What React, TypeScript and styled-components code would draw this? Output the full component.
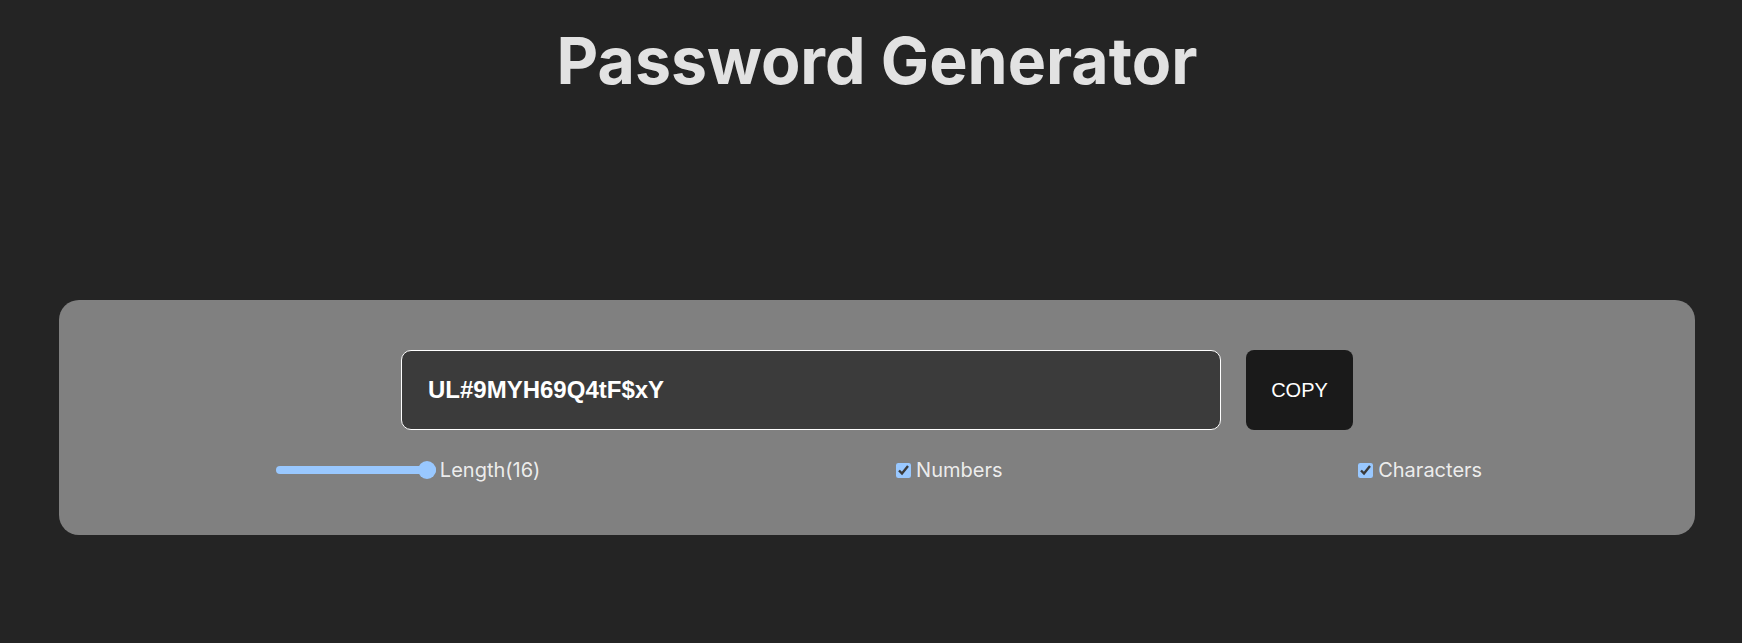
import React, { useState } from "react";
import styled, { createGlobalStyle } from "styled-components";

const GlobalStyle = createGlobalStyle`
  :root {
    color-scheme: dark;
  }
  html, body {
    margin: 0;
    padding: 0;
    background: #242424;
  }
  body {
    font-family: Inter, "Noto Sans", sans-serif;
    color: rgba(255, 255, 255, 0.87);
    line-height: 1.5;
  }
`;

const Page = styled.div`
  display: flex;
  flex-direction: column;
  padding: 0 47px 0 59px;
  min-height: 643px;
  box-sizing: border-box;
`;

const Title = styled.h1`
  margin: 25px 0 0;
  font-family: Inter, sans-serif;
  font-weight: 700;
  font-size: 64.4px;
  line-height: 72px;
  text-align: center;
  color: rgba(255, 255, 255, 0.87);
`;

const Card = styled.div`
  margin-top: 203px;
  background: #808080;
  border-radius: 20px;
  padding: 50px 36px 50px 40px;
  display: flex;
  flex-direction: column;
  gap: 25px;
`;

const InputRow = styled.div`
  display: flex;
  justify-content: center;
  gap: 25px;
  padding-right: 4px;
`;

const PasswordField = styled.input`
  width: 820px;
  height: 80px;
  box-sizing: border-box;
  border: 1px solid #ffffff;
  border-radius: 10px;
  background: #3b3b3b;
  color: #ffffff;
  padding: 0 26px;
  font-family: "Liberation Sans", Arial, sans-serif;
  font-weight: 700;
  font-size: 24px;
  outline: none;
`;

const CopyButton = styled.button`
  width: 107px;
  height: 80px;
  border: none;
  border-radius: 8px;
  background: #1a1a1a;
  color: #ffffff;
  font-family: "Liberation Sans", Arial, sans-serif;
  font-size: 20px;
  cursor: pointer;
`;

const OptionsRow = styled.div`
  display: flex;
  justify-content: space-around;
  align-items: center;
  height: 30px;
`;

const Option = styled.label`
  display: flex;
  align-items: center;
  font-family: Inter, sans-serif;
  font-size: 20px;
  line-height: 30px;
  color: rgba(255, 255, 255, 0.87);
`;

const Range = styled.input`
  -webkit-appearance: none;
  appearance: none;
  width: 160px;
  height: 18px;
  margin: 0 4px 0 0;
  background: transparent;
  &::-webkit-slider-runnable-track {
    height: 8px;
    border-radius: 4px;
    background: #99c8ff;
  }
  &::-webkit-slider-thumb {
    -webkit-appearance: none;
    width: 18px;
    height: 18px;
    margin-top: -5px;
    border-radius: 50%;
    background: #99c8ff;
    border: none;
  }
`;

const Check = styled.input`
  width: 15px;
  height: 15px;
  margin: 0 5px 0 2px;
  accent-color: #99c8ff;
`;

export default function App() {
  const [length, setLength] = useState(16);
  const [numbers, setNumbers] = useState(true);
  const [chars, setChars] = useState(true);
  return (
    <>
      <GlobalStyle />
      <Page>
        <Title>Password Generator</Title>
        <Card>
          <InputRow>
            <PasswordField type="text" readOnly value="UL#9MYH69Q4tF$xY" />
            <CopyButton>COPY</CopyButton>
          </InputRow>
          <OptionsRow>
            <Option>
              <Range
                type="range"
                min={6}
                max={16}
                value={length}
                onChange={(e) => setLength(Number(e.target.value))}
              />
              Length({length})
            </Option>
            <Option>
              <Check type="checkbox" checked={numbers} onChange={() => setNumbers(!numbers)} />
              Numbers
            </Option>
            <Option>
              <Check type="checkbox" checked={chars} onChange={() => setChars(!chars)} />
              Characters
            </Option>
          </OptionsRow>
        </Card>
      </Page>
    </>
  );
}
